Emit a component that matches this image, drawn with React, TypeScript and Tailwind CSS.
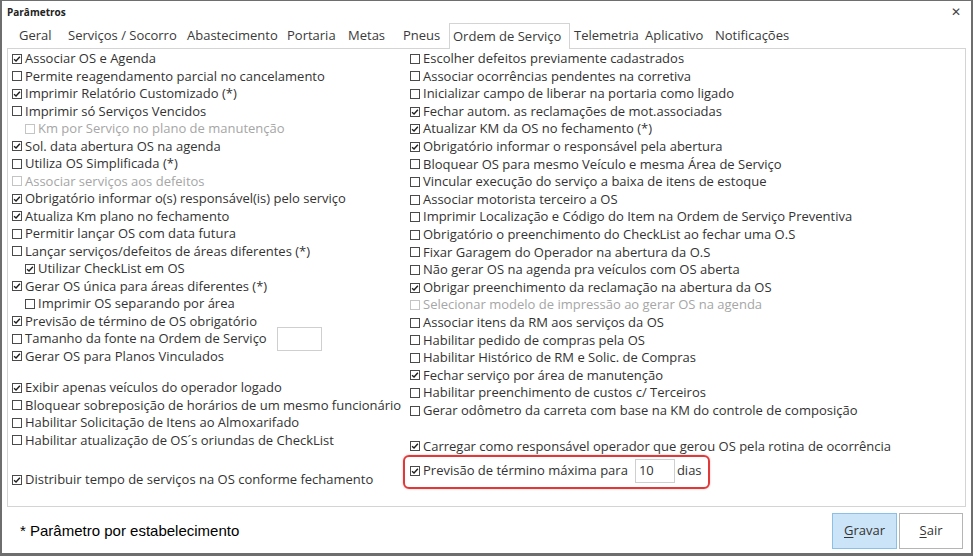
import React from 'react'

type Item = {
  label: string
  checked?: boolean
  disabled?: boolean
  indent?: boolean
  gap?: string
  extra?: 'fontSize'
}

const leftItems: Item[] = [
  { label: 'Associar OS e Agenda', checked: true },
  { label: 'Permite reagendamento parcial no cancelamento' },
  { label: 'Imprimir Relatório Customizado (*)', checked: true },
  { label: 'Imprimir só Serviços Vencidos' },
  { label: 'Km por Serviço no plano de manutenção', indent: true, disabled: true },
  { label: 'Sol. data abertura OS na agenda', checked: true },
  { label: 'Utiliza OS Simplificada (*)' },
  { label: 'Associar serviços aos defeitos', disabled: true },
  { label: 'Obrigatório informar o(s) responsável(is) pelo serviço', checked: true },
  { label: 'Atualiza Km plano no fechamento', checked: true },
  { label: 'Permitir lançar OS com data futura' },
  { label: 'Lançar serviços/defeitos de áreas diferentes (*)' },
  { label: 'Utilizar CheckList em OS', checked: true, indent: true },
  { label: 'Gerar OS única para áreas diferentes (*)', checked: true },
  { label: 'Imprimir OS separando por área', indent: true },
  { label: 'Previsão de término de OS obrigatório', checked: true },
  { label: 'Tamanho da fonte na Ordem de Serviço', extra: 'fontSize' },
  { label: 'Gerar OS para Planos Vinculados', checked: true },
  { label: 'Exibir apenas veículos do operador logado', checked: true, gap: 'mt-[14px]' },
  { label: 'Bloquear sobreposição de horários de um mesmo funcionário' },
  { label: 'Habilitar Solicitação de Itens ao Almoxarifado' },
  { label: 'Habilitar atualização de OS´s oriundas de CheckList' },
  { label: 'Distribuir tempo de serviços na OS conforme fechamento', checked: true, gap: 'mt-[22px]' },
]

const rightItems: Item[] = [
  { label: 'Escolher defeitos previamente cadastrados' },
  { label: 'Associar ocorrências pendentes na corretiva' },
  { label: 'Inicializar campo de liberar na portaria como ligado' },
  { label: 'Fechar autom. as reclamações de mot.associadas', checked: true },
  { label: 'Atualizar KM da OS no fechamento (*)', checked: true },
  { label: 'Obrigatório informar o responsável pela abertura', checked: true },
  { label: 'Bloquear OS para mesmo Veículo e mesma Área de Serviço' },
  { label: 'Vincular execução do serviço a baixa de itens de estoque' },
  { label: 'Associar motorista terceiro a OS' },
  { label: 'Imprimir Localização e Código do Item na Ordem de Serviço Preventiva' },
  { label: 'Obrigatório o preenchimento do CheckList ao fechar uma O.S' },
  { label: 'Fixar Garagem do Operador na abertura da O.S' },
  { label: 'Não gerar OS na agenda pra veículos com OS aberta' },
  { label: 'Obrigar preenchimento da reclamação na abertura da OS', checked: true },
  { label: 'Selecionar modelo de impressão ao gerar OS na agenda', disabled: true },
  { label: 'Associar itens da RM aos serviços da OS' },
  { label: 'Habilitar pedido de compras pela OS' },
  { label: 'Habilitar Histórico de RM e Solic. de Compras' },
  { label: 'Fechar serviço por área de manutenção', checked: true },
  { label: 'Habilitar preenchimento de custos c/ Terceiros' },
  { label: 'Gerar odômetro da carreta com base na KM do controle de composição' },
  { label: 'Carregar como responsável operador que gerou OS pela rotina de ocorrência', checked: true, gap: 'mt-[18px]' },
]

// tab label + box width, taken from the original dialog
const tabs: { label: string; w: string }[] = [
  { label: 'Geral', w: 'w-[49px]' },
  { label: 'Serviços / Socorro', w: 'w-[119px]' },
  { label: 'Abastecimento', w: 'w-[100px]' },
  { label: 'Portaria', w: 'w-[61px]' },
  { label: 'Metas', w: 'w-[55px]' },
  { label: 'Pneus', w: 'w-[50px]' },
  { label: 'Ordem de Serviço', w: 'w-[121px]' },
  { label: 'Telemetria', w: 'w-[71px]' },
  { label: 'Aplicativo', w: 'w-[70px]' },
  { label: 'Notificações', w: 'w-[84px]' },
]

function CheckBox({ checked, disabled }: { checked?: boolean; disabled?: boolean }) {
  return (
    <span
      className={`flex h-[10px] w-[10px] shrink-0 items-center justify-center border bg-white ${
        disabled ? 'border-[#c4c4c4]' : 'border-[#4a4a4a]'
      }`}
    >
      {checked && (
        <svg viewBox="0 0 10 10" className="h-[8px] w-[8px]">
          <path d="M1.3 5.3 L3.8 7.6 L8.6 2.3" stroke="#1f1f1f" strokeWidth="1.8" fill="none" />
        </svg>
      )}
    </span>
  )
}

function Row({ item, h }: { item: Item; h: string }) {
  return (
    <div className={`flex ${h} items-center ${item.indent ? 'pl-[13px]' : ''} ${item.gap ?? ''}`}>
      <CheckBox checked={item.checked} disabled={item.disabled} />
      <span className={`ml-[3px] whitespace-nowrap ${item.disabled ? 'text-[#a6a6a6]' : 'text-[#333]'}`}>
        {item.label}
      </span>
      {item.extra === 'fontSize' && (
        <span className="-my-[4px] ml-[10px] h-[24px] w-[45px] shrink-0 border border-[#cfcfcf] bg-white" />
      )}
    </div>
  )
}

export default function App() {
  return (
    <div
      className="flex h-[556px] w-[973px] flex-col border-x-2 border-t border-b-[3px] border-[#6e6e6e] bg-white text-[13px] text-[#333]"
      style={{ fontFamily: '"Open Sans", "Noto Sans", sans-serif' }}
    >
      {/* title bar */}
      <div className="flex h-[22px] items-center justify-between pl-[5px] pr-[10px]">
        <span className="text-[10px] font-bold text-[#222]">Parâmetros</span>
        <span className="text-[12px] leading-none text-[#444]">✕</span>
      </div>

      {/* tabs */}
      <div className="flex h-[25px] items-end pl-[13px] text-[13px] text-[#3a3a3a]">
        {tabs.map((t) =>
          t.label === 'Ordem de Serviço' ? (
            <div
              key={t.label}
              className={`relative top-[1px] flex h-[26px] ${t.w} shrink-0 items-center border border-b-0 border-[#d4d4d4] bg-white pl-[3px]`}
            >
              {t.label}
            </div>
          ) : (
            <div key={t.label} className={`flex h-[24px] ${t.w} shrink-0 items-center pl-[4px] whitespace-nowrap`}>
              {t.label}
            </div>
          )
        )}
      </div>

      {/* panel */}
      <div className="ml-[5px] mr-[5px] flex h-[459px] border border-[#d4d4d4] bg-white pt-[1px]">
        <div className="flex w-[402px] flex-col pl-[4px]">
          {leftItems.map((it) => (
            <Row key={it.label} item={it} h="h-[17.5px]" />
          ))}
        </div>
        <div className="flex flex-col">
          {rightItems.map((it) => (
            <Row key={it.label} item={it} h="h-[17.6px]" />
          ))}
          <div className="-ml-[7px] flex h-[34px] w-[307px] items-center rounded-md border-2 border-[#e0393a] pb-[2px] pl-[5px] shadow-[0_0_2px_rgba(224,57,58,0.4)]">
            <CheckBox checked />
            <span className="ml-[3px] whitespace-nowrap">Previsão de término máxima para</span>
            <span className="ml-[7px] flex h-[24px] w-[40px] items-center border border-[#cfcfcf] pl-[3px]">10</span>
            <span className="ml-[2px]">dias</span>
          </div>
        </div>
      </div>

      {/* footer */}
      <div className="flex flex-1 items-center pl-[18px] pr-[8px] pt-[2px]">
        <span className="flex-1 text-[15px] text-black" style={{ fontFamily: '"Liberation Sans", Arial, sans-serif' }}>
          * Parâmetro por estabelecimento
        </span>
        <button className="h-[36px] w-[65px] border border-[#8cbfe8] bg-[#cce4f7] text-[#333]">
          <span className="underline underline-offset-2">G</span>ravar
        </button>
        <button className="ml-[2px] h-[36px] w-[64px] border border-[#b5b5b5] bg-white text-[#333]">
          <span className="underline underline-offset-2">S</span>air
        </button>
      </div>
    </div>
  )
}
